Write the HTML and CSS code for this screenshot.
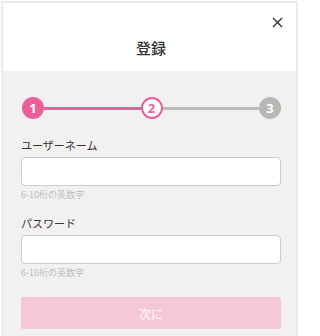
FILE: index.html
```html
<!DOCTYPE html>
<html lang="ja">
<head>
<meta charset="utf-8">
<meta name="viewport" content="width=300">
<title>登録</title>
<link rel="stylesheet" href="styles.css">
</head>
<body>
<div class="frame">
  <header class="header">
    <div class="close-row">
      <button class="close" aria-label="閉じる">
        <svg width="11" height="11" viewBox="0 0 11 11"><path d="M1 1L10 10M10 1L1 10" stroke="#333" stroke-width="1.4" fill="none"/></svg>
      </button>
    </div>
    <h1 class="title">登録</h1>
  </header>
  <main class="content">
    <div class="steps">
      <span class="step done">1</span>
      <span class="bar active"></span>
      <span class="step current">2</span>
      <span class="bar"></span>
      <span class="step todo">3</span>
    </div>
    <label class="label first">ユーザーネーム</label>
    <input class="field" type="text">
    <div class="hint">6-10桁の英数字</div>
    <label class="label">パスワード</label>
    <input class="field" type="password">
    <div class="hint">6-16桁の英数字</div>
    <button class="next">次に</button>
  </main>
</div>
</body>
</html>
```

FILE: styles.css
```css
html, body {
  margin: 0;
  padding: 0;
  background: #ffffff;
}
body {
  font-family: "Noto Sans CJK JP", "Noto Sans", sans-serif;
  color: #333333;
  width: 300px;
  overflow: hidden;
}
.frame {
  width: 297px;
  margin: 1px 0 0 1px;
  border: 2px solid #ebebeb;
  border-bottom: none;
  height: 340px;
  background: #f3f1ef;
  box-sizing: border-box;
}
.header {
  background: #ffffff;
  height: 68px;
  display: flex;
  flex-direction: column;
}
.close-row {
  display: flex;
  justify-content: flex-end;
  padding: 14px 13px 0 0;
}
.close {
  width: 11px;
  height: 11px;
  padding: 0;
  border: none;
  background: none;
  display: block;
}
.close svg { display: block; }
.title {
  margin: 10px 0 0 0;
  font-size: 15px;
  line-height: 20px;
  font-weight: 500;
  text-align: center;
  color: #333333;
  padding-left: 3px;
}
.content {
  padding: 26px 15px 0 18px;
  display: flex;
  flex-direction: column;
}
.steps {
  display: flex;
  align-items: center;
  margin-left: 1px;
}
.step {
  width: 22px;
  height: 22px;
  border-radius: 50%;
  box-sizing: border-box;
  display: flex;
  align-items: center;
  justify-content: center;
  font-family: "Noto Sans", sans-serif;
  font-weight: 700;
  font-size: 13px;
  line-height: 1;
  flex: none;
}
.step.done {
  background: #ea5f99;
  color: #ffffff;
}
.step.current {
  background: #ffffff;
  border: 2px solid #ea5f99;
  color: #ea5f99;
}
.step.todo {
  background: #b8b8b8;
  color: #ffffff;
}
.bar {
  flex: 1;
  height: 3px;
  background: #bcbcbc;
}
.bar.active {
  background: #ea5f99;
}
.label {
  font-size: 11px;
  line-height: 16px;
  margin-top: 14px;
  color: #333333;
}
.label.first {
  margin-top: 18px;
}
.field {
  margin-top: 4px;
  height: 29px;
  box-sizing: border-box;
  border: 1px solid #cccccc;
  border-radius: 4px;
  background: #ffffff;
  width: 100%;
  min-width: 0;
  padding: 0 8px;
  font-size: 12px;
}
.hint {
  font-size: 9px;
  line-height: 13px;
  margin-top: 2px;
  color: #bdbdbd;
}
.next {
  margin-top: 18px;
  height: 32px;
  border: none;
  border-radius: 2px;
  background: #f5c7d8;
  color: #ffffff;
  font-family: "Noto Sans CJK JP", sans-serif;
  font-size: 12px;
  width: 100%;
}
```
